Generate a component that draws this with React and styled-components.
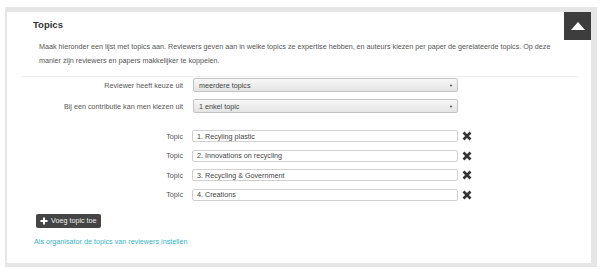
import styled, { createGlobalStyle } from "styled-components";

const GlobalStyle = createGlobalStyle`
  html, body {
    margin: 0;
    padding: 0;
    background: #fff;
    font-family: "Liberation Sans", Arial, sans-serif;
  }
`;

const topics = [
  "1. Recyling plastic",
  "2. Innovations on recycling",
  "3. Recycling & Government",
  "4. Creations",
];

export default function App() {
  return (
    <>
      <GlobalStyle />
      <Page>
        <Panel>
          <ToggleButton>
            <svg width="14" height="8" viewBox="0 0 14 8">
              <polygon points="7,0 14,8 0,8" fill="#fff" />
            </svg>
          </ToggleButton>
          <Title>Topics</Title>
          <Description>
            Maak hieronder een lijst met topics aan. Reviewers geven aan in welke topics ze
            expertise hebben, en auteurs kiezen per paper de gerelateerde topics. Op deze
            manier zijn reviewers en papers makkelijker te koppelen.
          </Description>
          <Divider />

          <SettingsForm>
            <Label>Reviewer heeft keuze uit</Label>
            <Select>
              <span>meerdere topics</span>
              <Arrow>▼</Arrow>
            </Select>
            <Label>Bij een contributie kan men kiezen uit</Label>
            <Select>
              <span>1 enkel topic</span>
              <Arrow>▼</Arrow>
            </Select>
          </SettingsForm>

          <TopicList>
            {topics.map((t) => (
              <TopicRow key={t}>
                <Label>Topic</Label>
                <Input>{t}</Input>
                <RemoveIcon viewBox="0 0 10 10">
                  <path d="M1.5 1.5 L8.5 8.5 M8.5 1.5 L1.5 8.5" stroke="#333" strokeWidth="2.6" />
                </RemoveIcon>
              </TopicRow>
            ))}
          </TopicList>

          <AddButton>
            <svg width="8" height="8" viewBox="0 0 8 8">
              <path d="M4 0.5 V7.5 M0.5 4 H7.5" stroke="#fff" strokeWidth="2" />
            </svg>
            Voeg topic toe
          </AddButton>
          <Link href="#">Als organisator de topics van reviewers instellen</Link>
        </Panel>
      </Page>
    </>
  );
}

const Page = styled.div`
  padding: 7px 5px 8px 5px;
`;

const Panel = styled.div`
  position: relative;
  background: #fff;
  border-style: solid;
  border-color: #e6e6e6;
  border-width: 5px 6px 4px 2px;
  padding: 7px 0 15px 0;
`;

const ToggleButton = styled.div`
  position: absolute;
  top: 0;
  right: 0;
  width: 27px;
  height: 28px;
  background: #3d3d3d;
  display: flex;
  align-items: center;
  justify-content: center;
`;

const Title = styled.h2`
  margin: 0 0 9px 26px;
  font-size: 9.5px;
  line-height: 12px;
  font-weight: bold;
  color: #333;
`;

const Description = styled.p`
  margin: 0 0 0 32px;
  width: 520px;
  font-size: 7.2px;
  line-height: 14px;
  color: #555;
`;

const Divider = styled.hr`
  margin: 8px 13px 1px 14px;
  border: none;
  border-top: 1px solid #eee;
  height: 0;
`;

const SettingsForm = styled.div`
  display: grid;
  grid-template-columns: 176px 265px;
  column-gap: 10px;
  row-gap: 7px;
  align-items: center;
`;

const Label = styled.label`
  text-align: right;
  font-size: 7.2px;
  color: #555;
  white-space: nowrap;
`;

const Select = styled.div`
  box-sizing: border-box;
  height: 14px;
  display: flex;
  align-items: center;
  justify-content: space-between;
  padding: 0 4px 0 5px;
  border: 1px solid #c4c4c4;
  border-radius: 2px;
  background: linear-gradient(#f7f7f7, #e4e4e4);
  font-size: 7.2px;
  color: #444;
`;

const Arrow = styled.span`
  font-size: 4px;
  color: #444;
`;

const TopicList = styled.div`
  margin-top: 17px;
  display: flex;
  flex-direction: column;
  gap: 7.6px;
`;

const TopicRow = styled.div`
  display: grid;
  grid-template-columns: 176px 266px 10px;
  column-gap: 9px;
  align-items: center;
  & > svg {
    margin-left: -5px;
  }
`;

const Input = styled.div`
  box-sizing: border-box;
  height: 12px;
  display: flex;
  align-items: center;
  padding: 0 4px;
  border: 1px solid #d0d0d0;
  border-radius: 2px;
  background: #fff;
  font-size: 7.2px;
  color: #444;
`;

const RemoveIcon = styled.svg`
  width: 10px;
  height: 10px;
`;

const AddButton = styled.button`
  margin: 13px 0 0 29px;
  height: 14px;
  padding: 0 4px;
  display: flex;
  align-items: center;
  gap: 3px;
  border: none;
  border-radius: 2px;
  background: #444;
  color: #eee;
  font-family: "Liberation Sans", Arial, sans-serif;
  font-size: 7.2px;
`;

const Link = styled.a`
  display: block;
  margin: 8px 0 0 27px;
  font-size: 7.2px;
  line-height: 12px;
  color: #3ab4c6;
  text-decoration: none;
`;
